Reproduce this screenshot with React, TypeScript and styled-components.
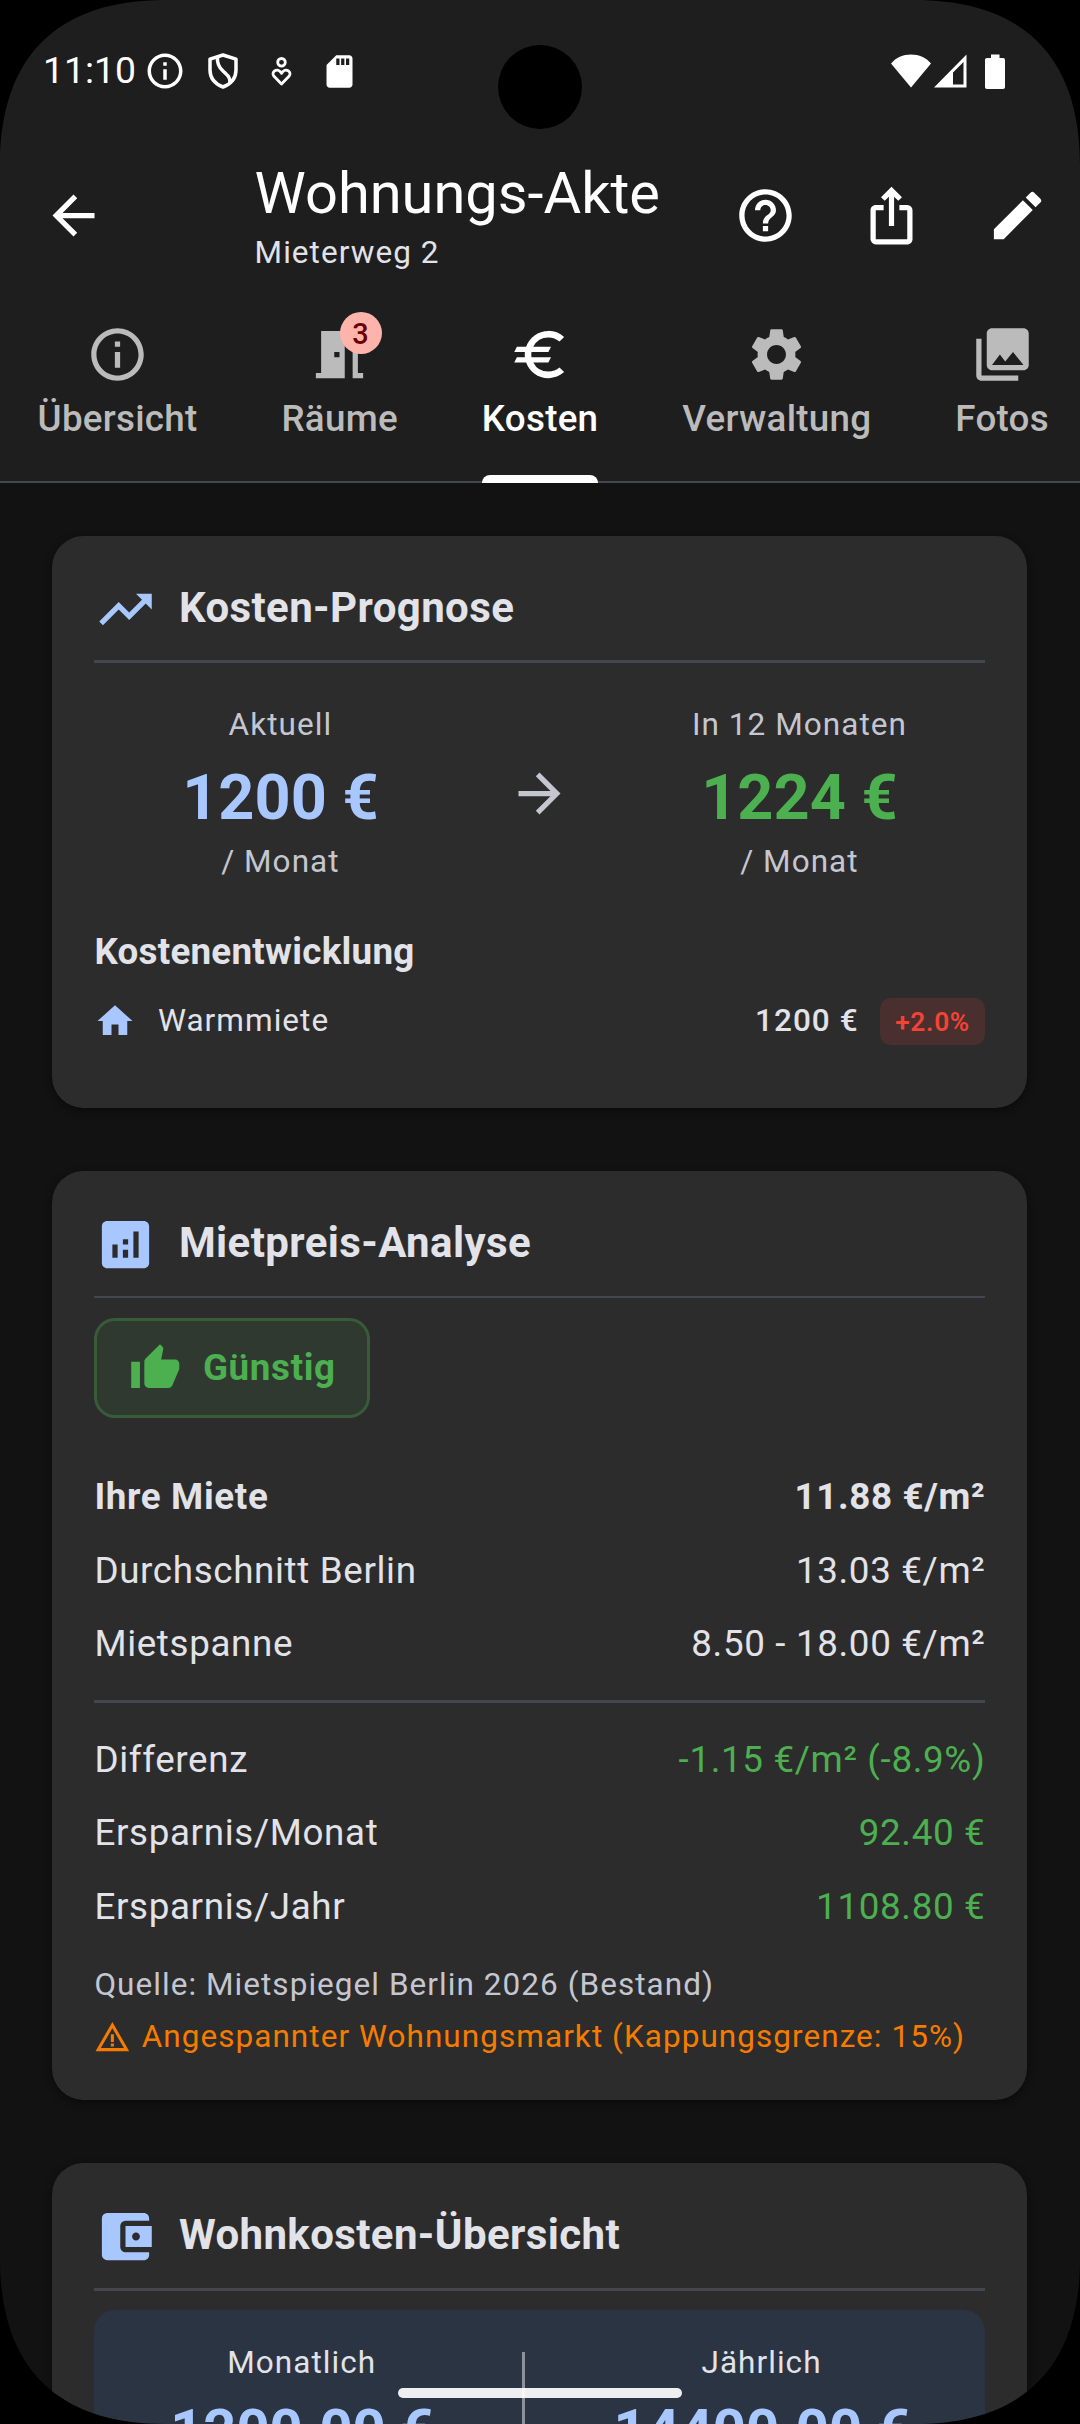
import React from "react";
import styled, { createGlobalStyle, css } from "styled-components";
import {
  MdAccountBalanceWallet,
  MdAnalytics,
  MdArrowBack,
  MdArrowForward,
  MdEdit,
  MdEuro,
  MdHelpOutline,
  MdHome,
  MdInfoOutline,
  MdIosShare,
  MdPhotoLibrary,
  MdSdCard,
  MdSettings,
  MdThumbUp,
  MdTrendingUp,
  MdWarningAmber,
} from "react-icons/md";

/* density-independent units: the screen has 2.625 px per dp */
const dp = (n: number) => `${n * 2.625}px`;

const c = {
  bar: "#1e1e1e",
  page: "#121212",
  card: "#2c2c2c",
  line: "#44474e",
  outline: "#8e9099",
  text: "#e2e2e9",
  muted: "#c4c6d0",
  primary: "#a8c7ff",
  green: "#4caf50",
  red: "#f44336",
  orange: "#f57c00",
};

const Global = createGlobalStyle`
  html, body { margin: 0; padding: 0; background: #000; }
  * { box-sizing: border-box; }
  svg { display: block; flex: none; }
`;

const bodyMedium = css`
  font-size: ${dp(14)};
  line-height: ${dp(20)};
  letter-spacing: ${dp(0.25)};
`;
const bodySmall = css`
  font-size: ${dp(12)};
  line-height: ${dp(16)};
  letter-spacing: ${dp(0.4)};
`;

const Screen = styled.div`
  position: relative;
  width: 1080px;
  height: 2424px;
  overflow: hidden;
  display: flex;
  flex-direction: column;
  background: ${c.page};
  color: ${c.text};
  font-family: Roboto, "Noto Sans", sans-serif;
  white-space: nowrap;
`;

const Header = styled.header`
  flex: none;
  background: ${c.bar};
`;

const StatusBar = styled.div`
  height: 142px;
  padding: 0 75px 0 43px;
  display: flex;
  align-items: center;
  color: #fff;
`;
const Clock = styled.span`
  width: 93px;
  font-size: 37.3px;
  line-height: 44px;
  margin-bottom: 2px;
`;
const StatusSlot = styled.span`
  width: 58px;
  display: flex;
  justify-content: center;
`;
const SystemIcons = styled.div`
  margin-left: auto;
  display: flex;
  align-items: center;
  svg + svg { margin-left: 3px; }
  svg + svg + svg { margin-left: 18px; }
`;

const Toolbar = styled.div`
  height: ${dp(56)};
  display: flex;
  align-items: center;
  color: #fff;
`;
const IconButton = styled.button<{ $w?: number }>`
  width: ${(p) => dp(p.$w ?? 48)};
  height: ${dp(48)};
  padding: 0;
  border: 0;
  background: none;
  color: inherit;
  display: flex;
  align-items: center;
  justify-content: center;
`;
const TitleBlock = styled.div`
  margin: 0 ${dp(16)} 0 auto;
`;
const Title = styled.h1`
  margin: 0;
  font-size: ${dp(22)};
  line-height: 71px;
  font-weight: 400;
`;
const Subtitle = styled.div`
  ${bodySmall}
  padding-top: 3.5px;
  margin-bottom: -1px;
  color: ${c.text};
`;

const Tabs = styled.nav`
  height: ${dp(74)};
  padding-left: 37.6px;
  display: flex;
  gap: ${dp(32)};
  border-bottom: 2px solid ${c.line};
`;
const Tab = styled.div<{ $active?: boolean }>`
  position: relative;
  flex: none;
  height: ${dp(74)};
  padding-top: 33.5px;
  display: flex;
  flex-direction: column;
  align-items: center;
  color: ${(p) => (p.$active ? "#fff" : "#bbbbbb")};
  font-size: ${dp(14)};
  font-weight: 500;
  line-height: ${dp(20)};
  letter-spacing: ${dp(0.1)};
  svg { margin-bottom: 7.5px; }
`;
const TabIndicator = styled.span`
  position: absolute;
  left: 0;
  right: 0;
  bottom: 0;
  height: 8px;
  border-radius: 8px 8px 0 0;
  background: #fff;
`;
const TabIcon = styled.span`
  position: relative;
`;
const Badge = styled.span`
  position: absolute;
  left: 31.5px;
  top: -10.5px;
  width: ${dp(16)};
  height: ${dp(16)};
  border-radius: 50%;
  background: #ffb4ab;
  color: #690005;
  font-size: ${dp(11)};
  line-height: 44px;
  text-align: center;
`;

const Content = styled.main`
  flex: 1;
  min-height: 0;
  padding: ${dp(20)} 52.6px 0 52.4px;
  display: flex;
  flex-direction: column;
  gap: ${dp(24)};
`;
const Card = styled.section`
  flex: none;
  padding: ${dp(16)};
  border-radius: ${dp(12)};
  background: ${c.card};
  box-shadow: 0 3px 8px rgba(0, 0, 0, 0.45);
`;
const CardHeader = styled.div`
  display: flex;
  align-items: center;
  gap: 21.5px;
  color: ${c.primary};
`;
const CardTitle = styled.h2`
  margin: 0;
  padding-bottom: 3px;
  color: ${c.text};
  font-size: ${dp(16)};
  line-height: 60px;
  letter-spacing: ${dp(0.15)};
  font-weight: 700;
`;
const Divider = styled.hr`
  margin: ${dp(7.5)} 0;
  height: ${dp(1)};
  border: 0;
  background: ${c.line};
`;

const Forecast = styled.div`
  padding: ${dp(8)} 0 41px;
  display: flex;
  align-items: center;
  color: ${c.muted};
  > svg { margin: 0 ${dp(16)}; }
`;
const ForecastColumn = styled.div`
  flex: 1;
  ${bodySmall}
  text-align: center;
`;
const ForecastValue = styled.div<{ $color: string }>`
  margin: ${dp(4)} 0 1px;
  font-size: ${dp(24)};
  line-height: ${dp(32)};
  letter-spacing: 0;
  font-weight: 700;
  color: ${(p) => p.$color};
`;
const SectionTitle = styled.h3`
  margin: 0 0 -1.6px;
  padding-top: 1.6px;
  font-size: ${dp(14)};
  line-height: ${dp(20)};
  letter-spacing: ${dp(0.1)};
  font-weight: 700;
`;
const CostRow = styled.div`
  padding: ${dp(8)} 0;
  display: flex;
  align-items: center;
  ${bodySmall}
  > svg { color: ${c.primary}; }
`;
const CostName = styled.span`
  flex: 1;
  margin-left: 21.5px;
`;
const CostValue = styled.span`
  font-weight: 500;
`;
const Change = styled.span`
  margin-left: ${dp(8)};
  padding: 6px 15.5px 4.25px;
  border-radius: ${dp(4)};
  background: rgba(244, 67, 54, 0.15);
  color: ${c.red};
  font-size: ${dp(10)};
  line-height: 37px;
  letter-spacing: 0.7px;
  font-weight: 600;
`;

const Rating = styled.div`
  width: fit-content;
  margin-bottom: ${dp(16)};
  padding: 21.25px 31.5px 20px;
  border: 3px solid rgba(76, 175, 80, 0.3);
  border-radius: ${dp(8)};
  background: rgba(76, 175, 80, 0.1);
  display: flex;
  align-items: center;
  gap: 21.5px;
  color: ${c.green};
  ${bodyMedium}
  font-weight: 700;
`;
const Row = styled.div<{ $bold?: boolean; $good?: boolean }>`
  padding: 11.25px 0 9.75px;
  display: flex;
  justify-content: space-between;
  ${bodyMedium}
  font-weight: ${(p) => (p.$bold ? 700 : 400)};
  span:last-child { color: ${(p) => (p.$good ? c.green : "inherit")}; }
`;
const Source = styled.div`
  margin-top: ${dp(8)};
  ${bodySmall}
  color: ${c.muted};
`;
const Notice = styled.div`
  margin-top: ${dp(4)};
  display: flex;
  align-items: center;
  gap: ${dp(4)};
  ${bodySmall}
  color: ${c.orange};
`;

const Totals = styled.div`
  padding: ${dp(12)};
  border-radius: ${dp(8)};
  background: #2b3442;
  display: flex;
  align-items: center;
  justify-content: space-around;
`;
const Total = styled.div`
  ${bodySmall}
  text-align: center;
`;
const TotalValue = styled.div`
  margin-top: ${dp(4)};
  font-size: ${dp(22)};
  line-height: ${dp(28)};
  letter-spacing: 0;
  font-weight: 700;
  color: ${c.primary};
`;
const TotalSeparator = styled.span`
  width: 3px;
  height: ${dp(40)};
  background: ${c.outline};
`;

/* hardware overlays: camera hole, gesture handle, rounded display corners */
const Camera = styled.div`
  position: absolute;
  left: 497.5px;
  top: 44.5px;
  width: 84px;
  height: 84px;
  border-radius: 50%;
  background: #000;
`;
const GestureHandle = styled.div`
  position: absolute;
  left: 398px;
  top: 2388px;
  width: 284px;
  height: 10px;
  border-radius: 5px;
  background: rgba(255, 255, 255, 0.92);
`;
const CornerSvg = styled.svg<{ $right?: boolean; $bottom?: boolean }>`
  position: absolute;
  ${(p) => (p.$right ? "right: 0;" : "left: 0;")}
  ${(p) => (p.$bottom ? "bottom: 0;" : "top: 0;")}
  transform: scale(${(p) => (p.$right ? -1 : 1)}, ${(p) => (p.$bottom ? -1 : 1)});
`;
const Corner = (p: { $right?: boolean; $bottom?: boolean }) => (
  <CornerSvg {...p} width="165" height="165" viewBox="0 0 165 165">
    <path d="M0 0H165C57 0 0 57 0 165Z" fill="#000" />
  </CornerSvg>
);

const ShieldIcon = () => (
  <svg width="30" height="36" viewBox="0 0 30 36" fill="none" stroke="#fff" strokeWidth="3.500">
    <path d="M15 2 28 6.2V17c0 8-5.2 14-13 17C7.200 31 2 25 2 17V6.200Z" strokeLinejoin="round" />
    <path d="M9.500 4.500c-.6 6 1 9.500 5.500 13.500s8 7 6.800 12.500" />
  </svg>
);
const CareIcon = () => (
  <svg width="21" height="29" viewBox="0 0 21 29" fill="none" stroke="#fff" strokeWidth="2.800">
    <circle cx="10.500" cy="5.300" r="3.800" />
    <path d="M10.500 27 3 19.300c-3.500-4.300 3-8.600 6.200-4.600l1.300 1.600 1.300-1.600c3.200-4 9.700.3 6.200 4.600Z" strokeLinejoin="round" />
  </svg>
);
const WifiIcon = () => (
  <svg width="40" height="34" viewBox="0 0 40 34" fill="#fff">
    <path d="M20 33.500 0 9.500C5 3.500 12 .5 20 .5s15 3 20 9Z" />
  </svg>
);
const SignalIcon = () => (
  <svg width="33" height="34" viewBox="0 0 33 34" fill="#fff">
    <path fillRule="evenodd" d="M0 33.500 32.500.5v33ZM19 18.500V30.500H29.500V8Z" />
  </svg>
);
const BatteryIcon = () => (
  <svg width="20" height="35" viewBox="0 0 20 35" fill="#fff">
    <path d="M6 .5h8.500V4H18c1.300 0 2 .7 2 2v27c0 1.300-.7 2-2 2H2c-1.300 0-2-.7-2-2V6c0-1.300.7-2 2-2h4Z" />
  </svg>
);
const DoorIcon = () => (
  <svg width="63" height="63" viewBox="0 0 24 24" fill="currentColor">
    <path d="M14 6v15H3v-2h2V3h9v1h5v15h2v2h-4V6h-3zm-4 5v2h2v-2h-2z" />
  </svg>
);

const rentRows = [
  { label: "Ihre Miete", value: "11.88 €/m²", bold: true },
  { label: "Durchschnitt Berlin", value: "13.03 €/m²" },
  { label: "Mietspanne", value: "8.50 - 18.00 €/m²" },
];
const savingRows = [
  { label: "Differenz", value: "-1.15 €/m² (-8.9%)" },
  { label: "Ersparnis/Monat", value: "92.40 €" },
  { label: "Ersparnis/Jahr", value: "1108.80 €" },
];

export default function App() {
  return (
    <Screen>
      <Global />
      <Header>
        <StatusBar>
          <Clock>11:10</Clock>
          <StatusSlot><MdInfoOutline size={42} /></StatusSlot>
          <StatusSlot><ShieldIcon /></StatusSlot>
          <StatusSlot><CareIcon /></StatusSlot>
          <StatusSlot><MdSdCard size={39} /></StatusSlot>
          <SystemIcons>
            <WifiIcon />
            <SignalIcon />
            <BatteryIcon />
          </SystemIcons>
        </StatusBar>
        <Toolbar>
          <IconButton $w={56}><MdArrowBack size={63} /></IconButton>
          <TitleBlock>
            <Title>Wohnungs-Akte</Title>
            <Subtitle>Mieterweg 2</Subtitle>
          </TitleBlock>
          <IconButton><MdHelpOutline size={63} /></IconButton>
          <IconButton><MdIosShare size={63} /></IconButton>
          <IconButton><MdEdit size={63} /></IconButton>
        </Toolbar>
        <Tabs>
          <Tab><MdInfoOutline size={63} />Übersicht</Tab>
          <Tab>
            <TabIcon><DoorIcon /><Badge>3</Badge></TabIcon>
            Räume
          </Tab>
          <Tab $active><MdEuro size={63} />Kosten<TabIndicator /></Tab>
          <Tab><MdSettings size={63} />Verwaltung</Tab>
          <Tab><MdPhotoLibrary size={63} />Fotos</Tab>
        </Tabs>
      </Header>

      <Content>
        <Card>
          <CardHeader>
            <MdTrendingUp size={63} />
            <CardTitle>Kosten-Prognose</CardTitle>
          </CardHeader>
          <Divider />
          <Forecast>
            <ForecastColumn>
              Aktuell
              <ForecastValue $color={c.primary}>1200 €</ForecastValue>
              / Monat
            </ForecastColumn>
            <MdArrowForward size={63} />
            <ForecastColumn>
              In 12 Monaten
              <ForecastValue $color={c.green}>1224 €</ForecastValue>
              / Monat
            </ForecastColumn>
          </Forecast>
          <SectionTitle>Kostenentwicklung</SectionTitle>
          <CostRow>
            <MdHome size={42} />
            <CostName>Warmmiete</CostName>
            <CostValue>1200 €</CostValue>
            <Change>+2.0%</Change>
          </CostRow>
        </Card>

        <Card>
          <CardHeader>
            <MdAnalytics size={63} />
            <CardTitle>Mietpreis-Analyse</CardTitle>
          </CardHeader>
          <Divider />
          <Rating><MdThumbUp size={52.5} />Günstig</Rating>
          {rentRows.map((r) => (
            <Row key={r.label} $bold={r.bold}><span>{r.label}</span><span>{r.value}</span></Row>
          ))}
          <Divider />
          {savingRows.map((r) => (
            <Row key={r.label} $good><span>{r.label}</span><span>{r.value}</span></Row>
          ))}
          <Source>Quelle: Mietspiegel Berlin 2026 (Bestand)</Source>
          <Notice><MdWarningAmber size={36.75} />Angespannter Wohnungsmarkt (Kappungsgrenze: 15%)</Notice>
        </Card>

        <Card>
          <CardHeader>
            <MdAccountBalanceWallet size={63} />
            <CardTitle>Wohnkosten-Übersicht</CardTitle>
          </CardHeader>
          <Divider />
          <Totals>
            <Total>Monatlich<TotalValue>1200.00 €</TotalValue></Total>
            <TotalSeparator />
            <Total>Jährlich<TotalValue>14400.00 €</TotalValue></Total>
          </Totals>
        </Card>
      </Content>

      <Camera />
      <GestureHandle />
      <Corner />
      <Corner $right />
      <Corner $bottom />
      <Corner $right $bottom />
    </Screen>
  );
}
